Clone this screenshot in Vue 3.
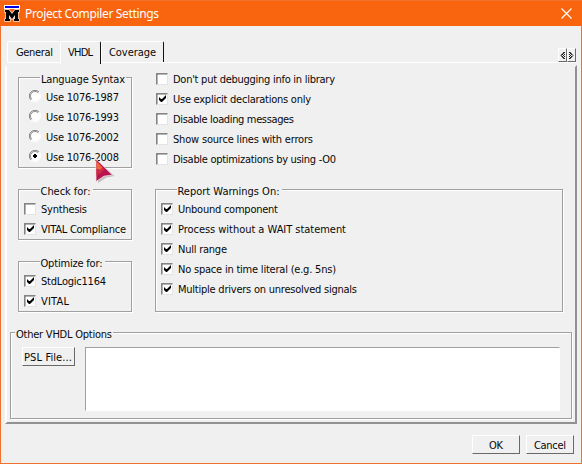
<script setup>
import { ref } from 'vue'

const syntax = ref('Use 1076-2008')
const versions = [
  { label: 'Use 1076-1987', w: 73 },
  { label: 'Use 1076-1993', w: 73 },
  { label: 'Use 1076-2002', w: 73 },
  { label: 'Use 1076-2008', w: 73 },
]
const tabs = [
  { label: 'General', w: 37, cls: 'general' },
  { label: 'VHDL', w: 25, cls: 'vhdl' },
  { label: 'Coverage', w: 47, cls: 'coverage' },
]
const general = [
  { label: "Don't put debugging info in library", w: 162, on: false },
  { label: 'Use explicit declarations only', w: 138, on: true },
  { label: 'Disable loading messages', w: 121, on: false },
  { label: 'Show source lines with errors', w: 140, on: false },
  { label: 'Disable optimizations by using -O0', w: 163, on: false },
]
const groups = [
  {
    title: 'Check for:', tw: 50, cls: 'check-for',
    items: [
      { label: 'Synthesis', w: 46, on: false },
      { label: 'VITAL Compliance', w: 85, on: true },
    ],
  },
  {
    title: 'Optimize for:', tw: 62, cls: 'optimize-for',
    items: [
      { label: 'StdLogic1164', w: 65, on: true },
      { label: 'VITAL', w: 28, on: true },
    ],
  },
  {
    title: 'Report Warnings On:', tw: 102, cls: 'warnings',
    items: [
      { label: 'Unbound component', w: 100, on: true },
      { label: 'Process without a WAIT statement', w: 168, on: true },
      { label: 'Null range', w: 49, on: true },
      { label: 'No space in time literal (e.g. 5ns)', w: 158, on: true },
      { label: 'Multiple drivers on unresolved signals', w: 179, on: true },
    ],
  },
]
</script>

<template>
  <div class="window">
    <header class="titlebar">
      <svg class="logo" width="16" height="17" viewBox="0 0 16 17">
        <rect width="16" height="4" fill="#fff" />
        <rect x="1" y="1" width="14" height="2" fill="#0000e8" />
        <path d="M1 5h4l3 4 3-4h4v2h-1v7h1v2h-5v-2h1v-4l-3 4-3-4v4h1v2H1v-2h1V7H1z" fill="#000" stroke="#f3dfd0" stroke-width="1.400" paint-order="stroke" />
      </svg>
      <svg class="title" width="136" height="18"><text x="0" y="13" textLength="134">Project Compiler Settings</text></svg>
      <svg class="close" width="11" height="11" viewBox="0 0 11 11"><path d="M.5.5l10 10M10.500.500l-10 10" stroke="#fff" stroke-width="1.200" /></svg>
    </header>

    <nav class="tabs">
      <button v-for="t in tabs" :key="t.label" :class="['tab', t.cls]">
        <svg class="label" :width="t.w + 2" height="16"><text x="0" y="12" :textLength="t.w">{{ t.label }}</text></svg>
      </button>
      <div class="scroll">
        <button><svg width="5" height="9" viewBox="0 0 5 9"><path d="M4.500 1v7M3.500 2v5M2.500 3v3M1.500 3.500v2" stroke="#222" stroke-dasharray="1 1" /><path d="M4 1L1 4.500 4 8" fill="none" stroke="#111" stroke-width=".8" /></svg></button>
        <button><svg width="5" height="9" viewBox="0 0 5 9"><path d="M.5 1v7M1.500 2v5M2.500 3v3" stroke="#222" stroke-dasharray="1 1" /><path d="M1 1l3 3.500L1 8" fill="none" stroke="#111" stroke-width=".8" /></svg></button>
      </div>
    </nav>

    <main class="panel">
      <div class="settings">
        <section class="group language">
          <svg class="legend" width="87" height="16"><text x="1" y="12" textLength="84">Language Syntax</text></svg>
          <label v-for="v in versions" :key="v.label" class="row" @click="syntax = v.label">
            <svg class="radio" width="12" height="12" viewBox="0 0 12 12">
              <circle cx="6" cy="6" r="5" fill="#fff" />
              <path d="M2 10A5.500 5.500 0 0 1 10 2" fill="none" stroke="#858585" />
              <path d="M2.800 9.200A4.500 4.500 0 0 1 9.200 2.800" fill="none" stroke="#666" stroke-width=".7" />
              <path d="M10 2A5.500 5.500 0 0 1 2 10" fill="none" stroke="#fff" />
              <path v-if="syntax === v.label" d="M5 4h2v1h1v2H7v1H5V7H4V5h1z" fill="#000" />
            </svg>
            <svg class="label" :width="v.w + 2" height="16"><text x="0" y="12" :textLength="v.w">{{ v.label }}</text></svg>
          </label>
        </section>

        <section class="general-options">
          <label v-for="o in general" :key="o.label" class="row">
            <span class="box"><svg v-if="o.on" width="7" height="7" viewBox="0 0 7 7"><path d="M0 2v3l2 2h1l4-4V0L3 4H2z" /></svg></span>
            <svg class="label" :width="o.w + 2" height="16"><text x="0" y="12" :textLength="o.w">{{ o.label }}</text></svg>
          </label>
        </section>

        <section v-for="g in groups" :key="g.title" :class="['group', g.cls]">
          <svg class="legend" :width="g.tw + 3" height="16"><text x="0.500" y="12" :textLength="g.tw">{{ g.title }}</text></svg>
          <label v-for="o in g.items" :key="o.label" class="row">
            <span class="box"><svg v-if="o.on" width="7" height="7" viewBox="0 0 7 7"><path d="M0 2v3l2 2h1l4-4V0L3 4H2z" /></svg></span>
            <svg class="label" :width="o.w + 2" height="16"><text x="0" y="12" :textLength="o.w">{{ o.label }}</text></svg>
          </label>
        </section>
      </div>

      <section class="group other">
        <svg class="legend" width="98" height="16"><text x="1" y="12" textLength="96">Other VHDL Options</text></svg>
        <div class="file-row">
          <button class="push psl"><svg class="label" width="50" height="16"><text x="0" y="12" textLength="48">PSL File...</text></svg></button>
          <div class="files"></div>
        </div>
      </section>
    </main>

    <footer class="actions">
      <button class="push"><svg class="label" width="15" height="16"><text x="0" y="12" textLength="14">OK</text></svg></button>
      <button class="push"><svg class="label" width="33" height="16"><text x="0" y="12" textLength="32">Cancel</text></svg></button>
    </footer>

    <svg class="cursor" width="21" height="27" viewBox="0 0 21 27">
      <path d="M3 4l16.500 14-8 1.500L3 25z" fill="#777" opacity=".4" />
      <path d="M1 1l16.500 16-8.500 1.200L1 23.500z" fill="#b8144f" stroke="#eedde2" stroke-width=".8" />
      <path d="M1.500 3l6 6.500-2 2.500-4-1z" fill="#f0643a" />
      <path d="M1.500 11l4 1 2-2.500 2 2-4 4-4 2z" fill="#cf2a45" />
    </svg>
  </div>
</template>

<style>
body { margin: 0; }
</style>

<style scoped>
* { box-sizing: border-box; }
.window {
  position: relative;
  width: 582px;
  height: 464px;
  display: flex;
  flex-direction: column;
  background: #f0f0f0;
  border: 1px solid #f0722c;
  border-top: 0;
  font: 11px "DejaVu Sans Condensed", "DejaVu Sans", sans-serif;
  font-stretch: condensed;
}
svg { display: block; flex: none; }
text { fill: #080808; }
button { padding: 0; border: 0; background: #f0f0f0; font: inherit; }
.titlebar {
  height: 26px;
  flex: none;
  margin: 0 -1px;
  padding: 0 10px 0 4px;
  display: flex;
  align-items: center;
  background: #f9650f;
  border-top: 1px solid #f0722c;
}
.logo { overflow: visible; }
.title { margin-left: 5px; font: 12px "Noto Sans", sans-serif; }
.title text { fill: #fff; }
.close { margin-left: auto; }
.tabs { height: 37px; flex: none; margin: 0 4px 0 6px; padding-top: 15px; display: flex; border-bottom: 1px solid #fff; }
.tab {
  height: 21px;
  display: flex;
  align-items: center;
  border-top: 1px solid #fff;
  border-left: 1px solid #fff;
  border-radius: 2px 2px 0 0;
}
.general { width: 53px; padding-left: 8px; }
.vhdl { width: 41px; height: 23px; padding: 0 0 2px 7px; border-right: 1px solid #111; }
.coverage { width: 63px; padding-left: 7px; border-right: 1px solid #111; }
.scroll { margin: 7px 1px 0 auto; display: flex; height: 14px; }
.scroll button {
  width: 9px;
  display: flex;
  align-items: center;
  justify-content: center;
  border: 1px solid;
  border-color: #fff #696969 #696969 #fff;
}
.panel {
  margin: 2px 4px 0;
  height: 359px;
  flex: none;
  display: flex;
  flex-direction: column;
  justify-content: space-between;
  padding: 0 3px 3px;
  border: 2px solid;
  border-color: #f0f0f0 #919191 #919191 #fff;
}
.settings {
  display: grid;
  grid-template-columns: 114px 408px;
  grid-template-rows: 91px 51px 51px;
  gap: 21px 23px;
  padding: 10px 0 0 8px;
}
.group { border: 1px solid #a0a0a0; box-shadow: 1px 1px 0 #fff, inset 1px 1px 0 #fff; }
.legend { margin: -7px 0 0 21px; background: #f0f0f0; }
.language .legend { width: 86px; }
.row { height: 20px; display: flex; align-items: center; }
.group .row { padding-left: 5px; }
.language .row { padding-left: 10px; }
.radio { margin: -2px 5px 0 0; }
.box {
  width: 12px;
  height: 12px;
  margin: -1px 5px 0 0;
  flex: none;
  display: flex;
  align-items: center;
  justify-content: center;
  background: #fff;
  border: 1px solid;
  border-color: #848484 #e4e4e4 #e4e4e4 #848484;
  box-shadow: inset .5px .5px 0 #696969;
}
.general-options { margin-top: -8px; padding-left: 1px; }
.warnings { grid-column: 2; grid-row: 2 / 4; }
.optimize-for { grid-column: 1; grid-row: 3; }
.other { width: 562px; height: 87px; }
.other .legend { margin-left: 4px; }
.file-row { display: flex; gap: 10px; padding: 5px 0 0 11px; }
.push {
  width: 48px;
  height: 19px;
  display: flex;
  align-items: center;
  justify-content: center;
  border: 1px solid;
  border-color: #fff #696969 #696969 #fff;
}
.psl { width: 53px; }
.files { width: 475px; height: 64px; background: #fff; border: 1px solid; border-color: #a0a0a0 #fff #fff #a0a0a0; }
.actions { display: flex; justify-content: flex-end; gap: 6px; padding: 11px 7px 0 0; }
.cursor { position: absolute; left: 94px; top: 158px; }
</style>
